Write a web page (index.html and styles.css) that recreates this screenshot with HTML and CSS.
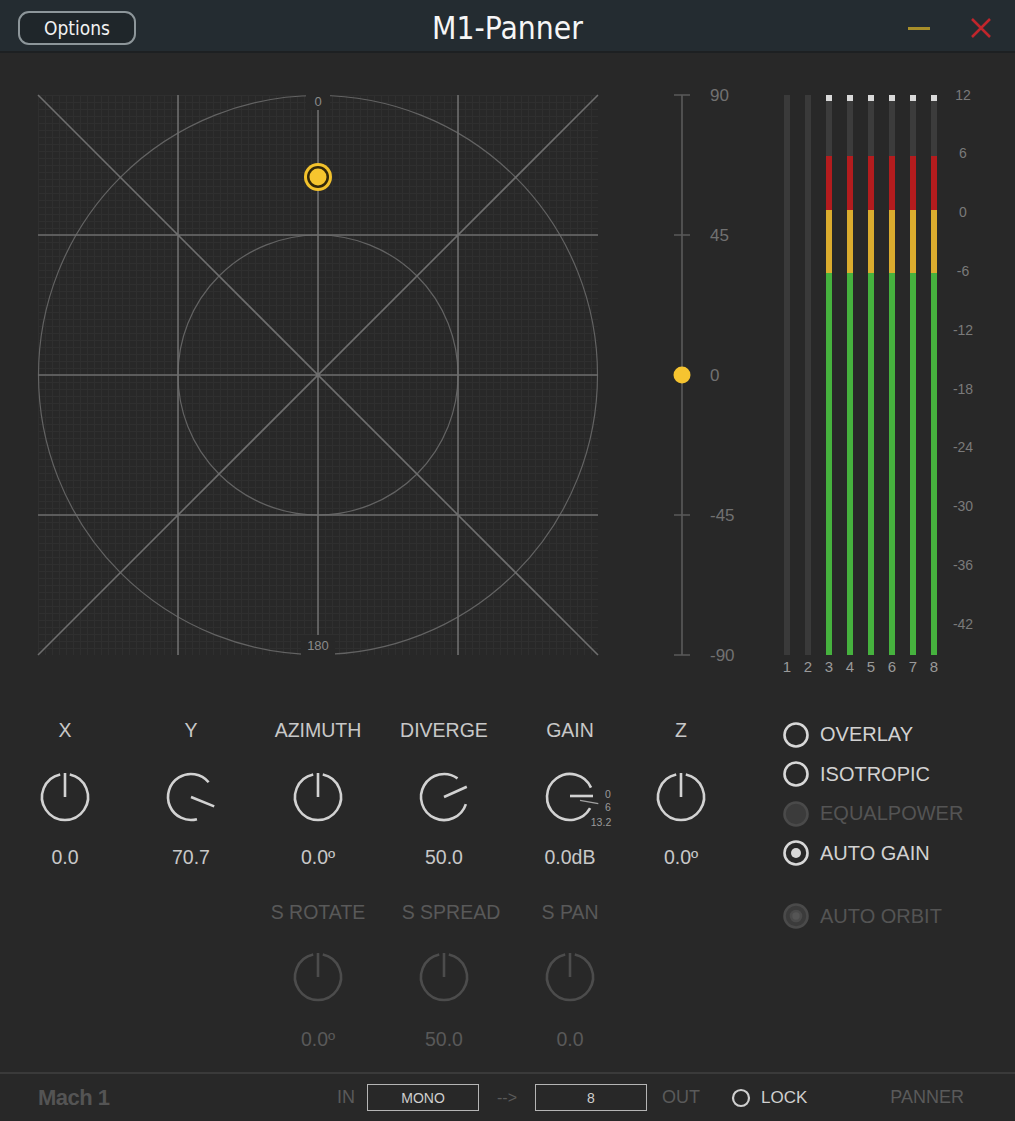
FILE: index.html
```html
<!DOCTYPE html>
<html lang="en">
<head>
  <meta charset="UTF-8">
  <meta name="viewport" content="width=device-width, initial-scale=1.0">
  <title>M1-Panner</title>
  <link rel="stylesheet" href="styles.css">
</head>
<body>
  <div class="window">
    <header class="titlebar">
      <button class="options-btn">Options</button>
      <h1 class="title">M1-Panner</h1>
      <div class="win-controls">
        <span class="win-min"></span>
        <svg class="win-close" viewBox="0 0 22 22"><path d="M2 2L20 20M20 2L2 20"/></svg>
      </div>
    </header>

    <main class="main">
      <section class="top">
        <!-- panner field -->
        <svg class="panner" viewBox="0 0 560 560">
          <defs>
            <pattern id="fine" width="7" height="7" patternUnits="userSpaceOnUse">
              <path d="M0 0.5H7M0.5 0V7" fill="none" stroke="#2f2f2f" stroke-width="1"/>
            </pattern>
          </defs>
          <rect width="560" height="560" fill="#282828"/>
          <rect width="560" height="560" fill="url(#fine)"/>
          <g class="rings">
            <circle cx="280" cy="280" r="279.5"/>
            <circle cx="280" cy="280" r="140"/>
          </g>
          <path class="axes" d="M140 0V560M280 0V560M420 0V560M0 140H560M0 280H560M0 420H560M0 0L560 560M560 0L0 560"/>
          <rect x="268" y="-1" width="24" height="16" fill="#282828"/>
          <text class="pan-tick" x="280" y="11">0</text>
          <rect x="263" y="540" width="34" height="21" fill="#282828"/>
          <text class="pan-tick" x="280" y="555">180</text>
          <circle cx="280" cy="82" r="14" fill="#f3c22c"/>
          <circle cx="280" cy="82" r="11" fill="#33280a"/>
          <circle cx="280" cy="82" r="8.5" fill="#f6c52e"/>
        </svg>

        <!-- elevation slider -->
        <svg class="elevation" viewBox="0 0 120 560">
          <path class="elev-line" d="M42 0V560"/>
          <path class="elev-line" d="M34 0H50M34 140H50M34 280H50M34 420H50M34 560H50"/>
          <circle cx="42" cy="280" r="8.5" fill="#f6c430"/>
          <text class="elev-num" x="70" y="6">90</text>
          <text class="elev-num" x="70" y="146">45</text>
          <text class="elev-num" x="70" y="286">0</text>
          <text class="elev-num" x="70" y="426">-45</text>
          <text class="elev-num" x="70" y="566">-90</text>
        </svg>

        <!-- output meters -->
        <div class="meters">
          <div class="meter"><div class="bar"></div><span class="meter-num">1</span></div>
          <div class="meter"><div class="bar"></div><span class="meter-num">2</span></div>
          <div class="meter"><div class="bar live"></div><span class="meter-num">3</span></div>
          <div class="meter"><div class="bar live"></div><span class="meter-num">4</span></div>
          <div class="meter"><div class="bar live"></div><span class="meter-num">5</span></div>
          <div class="meter"><div class="bar live"></div><span class="meter-num">6</span></div>
          <div class="meter"><div class="bar live"></div><span class="meter-num">7</span></div>
          <div class="meter"><div class="bar live"></div><span class="meter-num">8</span></div>
        </div>
        <div class="scale">
          <span>12</span><span>6</span><span>0</span><span>-6</span><span>-12</span>
          <span>-18</span><span>-24</span><span>-30</span><span>-36</span><span>-42</span>
        </div>
      </section>

      <section class="bottom">
        <div class="knobs">
          <div class="knob-cell">
            <span class="knob-label">X</span>
            <svg class="knob" viewBox="0 0 56 56"><path class="knob-arc" d="M32.78 5.5A23 23 0 1 1 23.22 5.5"/><path class="knob-ptr" d="M28 28V4"/></svg>
            <span class="knob-value">0.0</span>
          </div>
          <div class="knob-cell">
            <span class="knob-label">Y</span>
            <svg class="knob" viewBox="0 0 56 56"><path class="knob-arc" d="M33.95 50.22A23 23 0 1 1 45.62 13.22"/><path class="knob-ptr" d="M28 28L51.2 37.4"/></svg>
            <span class="knob-value">70.7</span>
          </div>
          <div class="knob-cell">
            <span class="knob-label">AZIMUTH</span>
            <svg class="knob" viewBox="0 0 56 56"><path class="knob-arc" d="M32.78 5.5A23 23 0 1 1 23.22 5.5"/><path class="knob-ptr" d="M28 28V4"/></svg>
            <span class="knob-value">0.0º</span>
          </div>
          <div class="knob-cell">
            <span class="knob-label">DIVERGE</span>
            <svg class="knob" viewBox="0 0 56 56"><path class="knob-arc" d="M49.88 35.11A23 23 0 1 1 41.52 9.39"/><path class="knob-ptr" d="M28 28L50.8 17.8"/></svg>
            <span class="knob-value">50.0</span>
          </div>
          <div class="knob-cell">
            <span class="knob-label">GAIN</span>
            <svg class="knob" viewBox="0 0 56 56">
              <path class="knob-arc" d="M48.1 39.2A23 23 0 1 1 49 18.6"/>
              <path class="knob-ptr" d="M28 27H51"/>
              <path class="gain-tick" d="M38 31.3L56.3 34.7"/>
              <text class="gain-mark" x="66" y="29">0</text>
              <text class="gain-mark" x="66" y="42">6</text>
              <text class="gain-mark" x="59" y="57">13.2</text>
            </svg>
            <span class="knob-value">0.0dB</span>
          </div>
          <div class="knob-cell">
            <span class="knob-label">Z</span>
            <svg class="knob" viewBox="0 0 56 56"><path class="knob-arc" d="M32.78 5.5A23 23 0 1 1 23.22 5.5"/><path class="knob-ptr" d="M28 28V4"/></svg>
            <span class="knob-value">0.0º</span>
          </div>

          <div class="knob-cell dim first-dim">
            <span class="knob-label">S ROTATE</span>
            <svg class="knob" viewBox="0 0 56 56"><path class="knob-arc" d="M32.78 5.5A23 23 0 1 1 23.22 5.5"/><path class="knob-ptr" d="M28 28V4"/></svg>
            <span class="knob-value">0.0º</span>
          </div>
          <div class="knob-cell dim">
            <span class="knob-label shifted">S SPREAD</span>
            <svg class="knob" viewBox="0 0 56 56"><path class="knob-arc" d="M32.78 5.5A23 23 0 1 1 23.22 5.5"/><path class="knob-ptr" d="M28 28V4"/></svg>
            <span class="knob-value">50.0</span>
          </div>
          <div class="knob-cell dim">
            <span class="knob-label">S PAN</span>
            <svg class="knob" viewBox="0 0 56 56"><path class="knob-arc" d="M32.78 5.5A23 23 0 1 1 23.22 5.5"/><path class="knob-ptr" d="M28 28V4"/></svg>
            <span class="knob-value">0.0</span>
          </div>
        </div>

        <div class="modes">
          <div class="mode">
            <svg class="radio" viewBox="0 0 28 28"><circle cx="14" cy="14" r="11.5"/></svg>OVERLAY
          </div>
          <div class="mode">
            <svg class="radio" viewBox="0 0 28 28"><circle cx="14" cy="14" r="11.5"/></svg>ISOTROPIC
          </div>
          <div class="mode off">
            <svg class="radio" viewBox="0 0 28 28"><circle cx="14" cy="14" r="11.5"/></svg>EQUALPOWER
          </div>
          <div class="mode">
            <svg class="radio" viewBox="0 0 28 28"><circle cx="14" cy="14" r="11.5"/><circle class="dot" cx="14" cy="14" r="5"/></svg>AUTO GAIN
          </div>
          <div class="mode off spaced">
            <svg class="radio" viewBox="0 0 28 28"><circle cx="14" cy="14" r="11.5"/><circle class="dot" cx="14" cy="14" r="5"/></svg>AUTO ORBIT
          </div>
        </div>
      </section>
    </main>

    <footer class="footer">
      <span class="brand">Mach 1</span>
      <span class="io-label">IN</span>
      <span class="io-box">MONO</span>
      <span class="arrow">--&gt;</span>
      <span class="io-box">8</span>
      <span class="io-label out">OUT</span>
      <span class="lock">
        <svg viewBox="0 0 20 20"><circle cx="10" cy="10" r="8"/></svg>LOCK
      </span>
      <span class="mode-name">PANNER</span>
    </footer>
  </div>
</body>
</html>
```

FILE: styles.css
```css
* { box-sizing: border-box; }

body {
  margin: 0;
  background: #1e1e1e;
  font-family: "Liberation Sans", Arial, sans-serif;
}

.window {
  width: 1015px;
  height: 1121px;
  background: #282828;
  display: flex;
  flex-direction: column;
}

/* title bar */
.titlebar {
  height: 53px;
  flex: none;
  padding-top: 5px;
  background: #242c31;
  border-bottom: 2px solid #1d2022;
  display: grid;
  grid-template-columns: 1fr auto 1fr;
  align-items: center;
}
.options-btn {
  justify-self: start;
  margin-left: 18px;
  width: 118px;
  height: 34px;
  border: 2px solid #8d969a;
  border-radius: 11px;
  background: #1f262a;
  color: #f2f2f2;
  font-family: "DejaVu Sans Condensed", "DejaVu Sans", sans-serif;
  font-size: 19px;
  padding: 0;
}
.title {
  margin: 0;
  font-family: "DejaVu Sans Condensed", "DejaVu Sans", sans-serif;
  font-weight: normal;
  font-size: 31.5px;
  color: #f6f6f6;
}
.win-controls {
  justify-self: end;
  margin-right: 23px;
  display: flex;
  align-items: center;
  gap: 40px;
}
.win-min { width: 22px; height: 3px; background: #a88f2a; }
.win-close { width: 22px; height: 22px; }
.win-close path { stroke: #c0262c; stroke-width: 2.5; fill: none; }

/* main area */
.main { flex: 1; display: flex; flex-direction: column; }

.top {
  display: flex;
  align-items: flex-start;
  margin-top: 42px;
  padding-left: 38px;
  height: 580px;
}
.panner { width: 560px; height: 560px; display: block; overflow: visible; }
.rings circle { fill: none; stroke: #636363; stroke-width: 1.2; }
.axes { fill: none; stroke: #6e6e6e; stroke-width: 1.6; }
.pan-tick {
  font-family: "Liberation Sans", Arial, sans-serif;
  font-size: 13px;
  fill: #8a8a8a;
  text-anchor: middle;
}

.elevation { width: 120px; height: 560px; margin-left: 42px; overflow: visible; }
.elev-line { fill: none; stroke: #5a5a5a; stroke-width: 1.6; }
.elev-num {
  font-family: "Liberation Sans", Arial, sans-serif;
  font-size: 17px;
  fill: #717171;
}

.meters { display: flex; gap: 15px; margin-left: 24px; }
.meter { width: 6px; display: flex; flex-direction: column; align-items: center; }
.bar { width: 6px; height: 560px; background: #3a3a3a; }
.bar.live {
  background: linear-gradient(to bottom,
    #d9d9d9 0 6px, #3c3c3c 6px 61px, #b41c1e 61px 115px,
    #dbac2e 115px 178px, #46b23e 178px 100%);
}
.meter-num {
  width: 20px;
  margin-top: 4px;
  font-size: 15px;
  line-height: 16px;
  text-align: center;
  color: #9a9a9a;
}

.scale {
  width: 30px;
  margin-left: 11px;
  margin-top: -29.4px;
  display: flex;
  flex-direction: column;
}
.scale span {
  height: 58.8px;
  line-height: 58.8px;
  text-align: center;
  font-size: 14px;
  color: #7a7a7a;
}

/* knobs */
.bottom { display: flex; padding-top: 43px; }

.knobs {
  display: grid;
  grid-template-columns: 126px 126px 128px 124px 128px 94px;
  row-gap: 31px;
  margin-left: 2px;
  align-content: start;
}
.knob-cell { display: flex; flex-direction: column; align-items: center; }
.first-dim { grid-column: 3; }
.knob-label {
  font-size: 19.5px;
  line-height: 24px;
  color: #c8c8c8;
  white-space: nowrap;
}
.knob-label.shifted { margin-left: 14px; }
.knob { width: 56px; height: 56px; margin-top: 27px; overflow: visible; }
.knob-value {
  margin-top: 20px;
  font-size: 19.5px;
  line-height: 24px;
  color: #c8c8c8;
}
.knob-arc, .knob-ptr { fill: none; stroke: #d2d2d2; stroke-width: 2.6; }
.gain-tick { fill: none; stroke: #a0a0a0; stroke-width: 1.3; }
.gain-mark {
  font-family: "Liberation Sans", Arial, sans-serif;
  font-size: 10.5px;
  fill: #9a9a9a;
  text-anchor: middle;
}

.dim .knob { margin-top: 25px; }
.dim .knob-value { margin-top: 22px; }
.dim .knob-label, .dim .knob-value { color: #595959; }
.dim .knob-arc, .dim .knob-ptr { stroke: #4c4c4c; }

/* mode toggles */
.modes {
  margin-left: 54px;
  margin-top: -4px;
  display: flex;
  flex-direction: column;
}
.mode {
  height: 39.5px;
  display: flex;
  align-items: center;
  padding-top: 2px;
  font-size: 20px;
  color: #d2d2d2;
}
.mode.spaced { margin-top: 23.5px; }
.radio { width: 28px; height: 28px; margin-right: 10px; }
.radio circle { fill: none; stroke: #d8d8d8; stroke-width: 2.6; }
.radio .dot { fill: #d8d8d8; stroke: none; }
.mode.off { color: #545454; }
.mode.off .radio circle { fill: #3b3b3b; stroke: #4a4a4a; }
.mode.off .radio .dot { fill: #555; }

/* footer */
.footer {
  height: 49px;
  flex: none;
  border-top: 2px solid #3a3a3a;
  display: flex;
  align-items: center;
  padding: 0 51px 0 38px;
  font-size: 18px;
  color: #5a5a5a;
}
.brand {
  width: 299px;
  font-size: 22px;
  font-weight: bold;
  letter-spacing: -0.5px;
  color: #545454;
}
.io-label { width: 30px; }
.io-label.out { width: 84px; padding-left: 15px; }
.io-box {
  width: 112px;
  height: 27px;
  border: 1px solid #b5b5b5;
  display: flex;
  align-items: center;
  justify-content: center;
  font-size: 14px;
  color: #cfcfcf;
}
.arrow { width: 56px; text-align: center; font-size: 16px; }
.lock { display: flex; align-items: center; font-size: 17px; color: #cfcfcf; }
.lock svg { width: 20px; height: 20px; margin-right: 10px; }
.lock circle { fill: none; stroke: #cfcfcf; stroke-width: 2.2; }
.mode-name { margin-left: auto; }
```
